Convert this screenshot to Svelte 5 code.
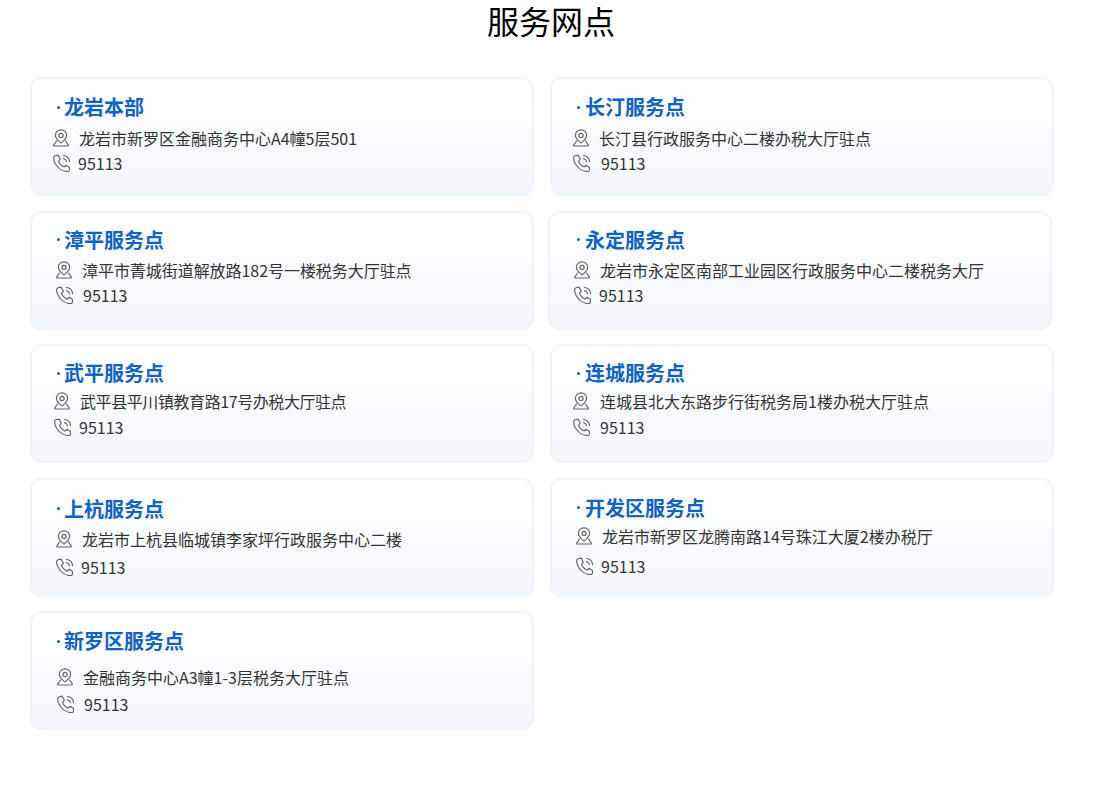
<script>
  // pad = left inset of the icon rows, gap = icon to text, top/line/ty = vertical tweaks per card, ls = letter spacing
  const points = [
    { name: '龙岩本部', addr: '龙岩市新罗区金融商务中心A4幢5层501', pad: 20, gap: 9, telGap: 8, top: 0, line: 25 },
    { name: '长汀服务点', addr: '长汀县行政服务中心二楼办税大厅驻点', pad: 20, gap: 9, telGap: 11, top: 0, line: 25 },
    { name: '漳平服务点', addr: '漳平市菁城街道解放路182号一楼税务大厅驻点', pad: 23, gap: 9, telGap: 10, top: -1, line: 25, ty: -1, ls: -0.05 },
    { name: '永定服务点', addr: '龙岩市永定区南部工业园区行政服务中心二楼税务大厅', pad: 23, gap: 9, telGap: 8, top: -1, line: 25, shift: -2, ty: -1 },
    { name: '武平服务点', addr: '武平县平川镇教育路17号办税大厅驻点', pad: 21, gap: 9, telGap: 8, top: -3, line: 26, ty: -1, ls: -0.42 },
    { name: '连城服务点', addr: '连城县北大东路步行街税务局1楼办税大厅驻点', pad: 20, gap: 10, telGap: 10, top: -3, line: 26, ty: -1 },
    { name: '上杭服务点', addr: '龙岩市上杭县临城镇李家坪行政服务中心二楼', pad: 23, gap: 9, telGap: 8, top: -1, line: 28, ty: 1 },
    { name: '开发区服务点', addr: '龙岩市新罗区龙腾南路14号珠江大厦2楼办税厅', pad: 23, gap: 9, telGap: 8, top: -3, line: 30 },
    { name: '新罗区服务点', addr: '金融商务中心A3幢1-3层税务大厅驻点', pad: 24, gap: 9, telGap: 10, top: 10, line: 27 }
  ]
</script>

<div class="page">
  <h1>服务网点</h1>
  <div class="grid">
    {#each points as p}
      <div class="card" style="margin-left: {p.shift || 0}px">
        <h3 style="padding-left: {25 - (p.shift || 0)}px; margin-top: {p.ty || 0}px"><span class="dot"></span>{p.name}</h3>
        <div class="row" style="padding-left: {p.pad}px; gap: {p.gap}px; margin-top: {p.top}px; letter-spacing: {p.ls || 0}px">
          <svg viewBox="0 0 18 18" width="18" height="18" fill="none" stroke="#666" stroke-width="1.2" stroke-linecap="round" stroke-linejoin="round">
            <path d="M9 14C6.300 11.700 3.400 9.300 3.400 6.400A5.600 5.600 0 0 1 14.600 6.400C14.600 9.300 11.700 11.700 9 14Z" />
            <circle cx="9" cy="6.400" r="2.100" />
            <path d="M4.600 12 1.800 15.800Q1.300 17 2.500 17H15.500Q16.700 17 16.200 15.800L13.400 12" />
          </svg>
          <span>{p.addr}</span>
        </div>
        <div class="row" style="padding-left: {p.pad}px; gap: {p.telGap}px; margin-top: {p.line - 24}px">
          <svg viewBox="0 0 18 18" width="18" height="18" fill="none" stroke="#666" stroke-width="1.2" stroke-linecap="round" stroke-linejoin="round">
            <path d="M3.500 1.500 6.200 1.200 8.300 5.200 6.600 7.400C7.300 9.600 9.700 12 12.100 13L14.100 11.300 17.600 13.500 17.400 16C17.200 17.200 16.200 17.800 15 17.700C8.200 17 2.400 11.200 1.600 4.300C1.500 3 2.300 1.800 3.500 1.500Z" />
            <path d="M11.500 1.500C14.700 1.900 17.200 4.400 17.600 7.600" />
            <path d="M11.500 4.600C13 4.900 14.200 6 14.500 7.600" />
          </svg>
          <span>95113</span>
        </div>
      </div>
    {/each}
  </div>
</div>

<style>
  :global(body) {
    margin: 0;
    background: #fff;
  }

  .page {
    font-family: "Noto Sans CJK SC", "Noto Sans", sans-serif;
    height: 789px;
    overflow: hidden;
  }

  h1 {
    margin: 0;
    height: 77px;
    padding-left: 2px;
    box-sizing: border-box;
    font-size: 32px;
    font-weight: 400;
    line-height: 40px;
    text-align: center;
    color: #000;
  }

  .grid {
    display: grid;
    grid-template-columns: 504px 504px;
    column-gap: 16px;
    row-gap: 14.500px;
    padding-left: 30px;
  }

  .card {
    box-sizing: border-box;
    width: 504px;
    height: 119px;
    padding-top: 14px;
    border: 2px solid #edf5fd;
    border-radius: 12px;
    background: linear-gradient(180deg, #fff 0%, #f3f8fd 100%);
    box-shadow: 0 0 2px #eef5fc;
  }

  .card:nth-child(even) .dot {
    margin-right: 5px;
  }

  h3 {
    display: flex;
    align-items: center;
    margin: 0 0 5px;
    font-size: 20px;
    font-weight: 700;
    line-height: 28px;
    color: #0f63c2;
  }

  .dot {
    width: 3px;
    height: 3px;
    margin-right: 4px;
    border-radius: 50%;
    background: #0f63c2;
  }

  .row {
    display: flex;
    align-items: center;
    height: 24px;
    font-size: 16px;
    color: #333;
  }
</style>
